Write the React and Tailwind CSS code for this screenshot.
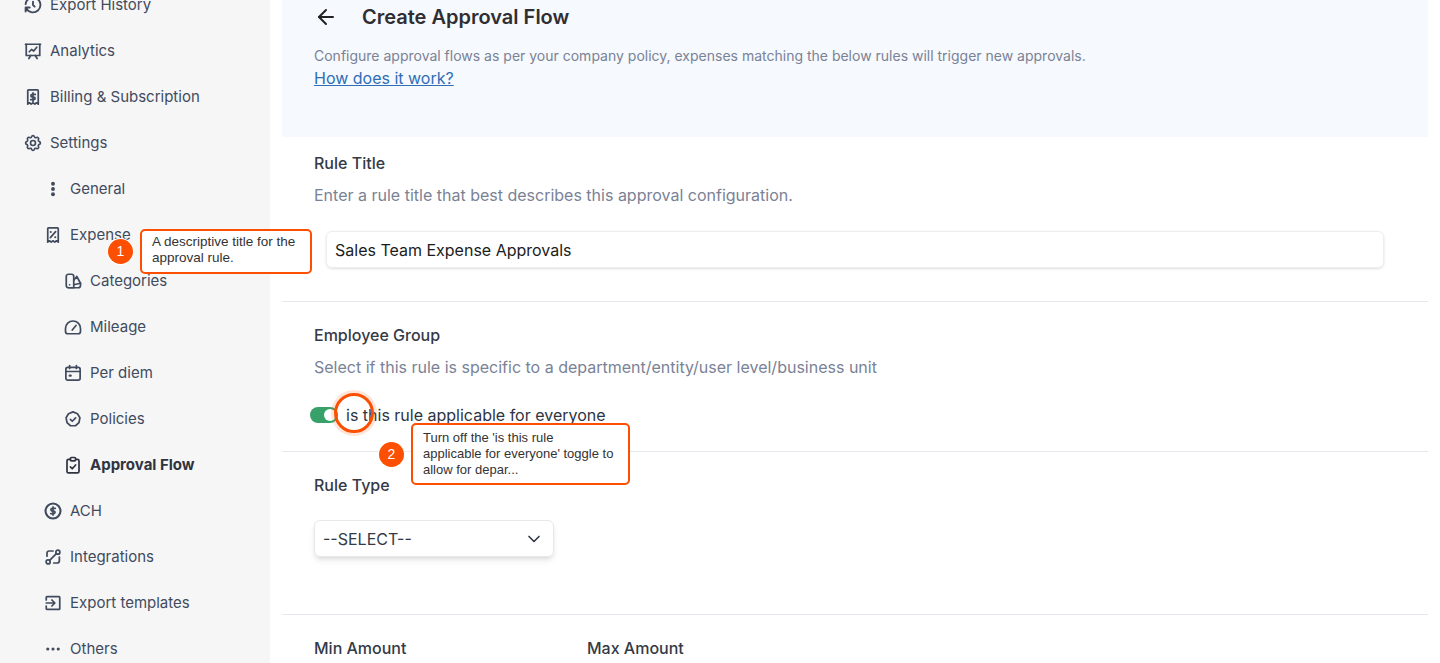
import React from 'react';
import { ChevronDown, ArrowLeft } from 'lucide-react';
import { TbHistory, TbSettings } from 'react-icons/tb';

function Ico({ children, strokeWidth = 2.3, ...props }) {
  return (
    <svg viewBox="0 0 24 24" fill="none" stroke="currentColor" strokeWidth={strokeWidth} strokeLinecap="round" strokeLinejoin="round" {...props}>
      {children}
    </svg>
  );
}

const receipt = 'M6 2.5h12a1 1 0 0 1 1 1v18l-2.3-1.8-2.3 1.8-2.4-1.8-2.4 1.8-2.3-1.8L5 21.5v-18a1 1 0 0 1 1-1z';

const HistoryIcon = ({ className }) => <TbHistory className={`${className} scale-110`} strokeWidth={2.3} />;
const SettingsIcon = ({ className }) => <TbSettings className={`${className} scale-110`} strokeWidth={2} />;
const AnalyticsIcon = (p) => (
  <Ico {...p}>
    <path d="M2 3h20" />
    <path d="M3 3v15h18V3" />
    <path d="M7 13l3-3 3 2 4-5" />
    <path d="M9 18l-2.5 4M15 18l2.5 4" />
  </Ico>
);
const BillingIcon = (p) => (
  <Ico {...p}>
    <path d={receipt} />
    <path d="M15 8.5h-4a1.5 1.5 0 0 0 0 3.5h2a1.5 1.5 0 0 1 0 3.5H9M12 6.5v11" />
  </Ico>
);
const GeneralIcon = (p) => (
  <svg viewBox="0 0 24 24" fill="currentColor" {...p}>
    <circle cx="12" cy="5" r="2.6" />
    <circle cx="12" cy="12" r="2.6" />
    <circle cx="12" cy="19" r="2.6" />
  </svg>
);
const ExpenseIcon = (p) => (
  <Ico {...p}>
    <path d={receipt} />
    <path d="M15.5 7.5l-7 8" />
    <path d="M9 8h.01M15 15h.01" strokeWidth="2.8" />
  </Ico>
);
const CategoriesIcon = (p) => (
  <Ico {...p}>
    <path d="M3 6a3 3 0 0 1 3-3h4a3 3 0 0 1 3 3v15H6a3 3 0 0 1-3-3z" />
    <path d="M13 11l4-5 5 9v3a3 3 0 0 1-3 3H7" />
    <path d="M13 17l9-2" />
    <path d="M7.5 17h.01" />
  </Ico>
);
const MileageIcon = (p) => (
  <Ico {...p}>
    <path d="M5 21h14a3 3 0 0 0 3-3v-4A10 10 0 0 0 2 14v4a3 3 0 0 0 3 3z" />
    <path d="M11 16l5-6" />
  </Ico>
);
const PerDiemIcon = (p) => (
  <Ico {...p}>
    <rect x="2.5" y="4.5" width="19" height="17" rx="2.5" />
    <path d="M7.5 2v4M16.5 2v4M2.5 10h19" />
    <path d="M7.5 15.5h1.5" strokeWidth="2.8" />
  </Ico>
);
const PoliciesIcon = (p) => (
  <Ico {...p}>
    <path d="M12 2.5l6 2.6 3.2 5.2-1.2 6.4-4.7 4.3H8.7L4 16.7l-1.2-6.4L6 5.1z" />
    <path d="M8.5 12.5l2.5 2.5 4.5-4.5" />
  </Ico>
);
const ApprovalIcon = (p) => (
  <Ico {...p}>
    <path d="M8.5 4.5H6a2 2 0 0 0-2 2v14a2 2 0 0 0 2 2h12a2 2 0 0 0 2-2v-14a2 2 0 0 0-2-2h-2.5" />
    <rect x="8.5" y="2" width="7" height="4.5" rx="1.5" />
    <path d="M8.5 14.5l2.5 2.5 4.5-5" />
  </Ico>
);
const AchIcon = (p) => (
  <Ico strokeWidth={2.8} {...p}>
    <circle cx="12" cy="12" r="10" />
    <path d="M15 8.5h-4a1.75 1.75 0 0 0 0 3.5h2a1.75 1.75 0 0 1 0 3.5H9M12 6.5v11" strokeWidth="2.2" />
  </Ico>
);
const IntegrationsIcon = (p) => (
  <Ico {...p}>
    <circle cx="18.5" cy="5.5" r="2.7" />
    <circle cx="5.5" cy="18.5" r="2.7" />
    <path d="M16.5 7.5l-9 9" />
    <path d="M12 4H7a3 3 0 0 0-3 3v4" />
    <path d="M20.5 12v5a3 3 0 0 1-3 3H13" />
  </Ico>
);
const ExportTemplatesIcon = (p) => (
  <Ico {...p}>
    <path d="M3 8V4.5a1 1 0 0 1 1-1h16a1 1 0 0 1 1 1v15a1 1 0 0 1-1 1H4a1 1 0 0 1-1-1V16" />
    <path d="M3 12h11M10.5 8l4 4-4 4" />
  </Ico>
);
const OthersIcon = (p) => (
  <svg viewBox="0 0 24 24" fill="currentColor" {...p}>
    <circle cx="5" cy="12" r="2.1" />
    <circle cx="12" cy="12" r="2.1" />
    <circle cx="19" cy="12" r="2.1" />
  </svg>
);

const navItems = [
  { label: 'Export History', icon: HistoryIcon, indent: 'pl-6' },
  { label: 'Analytics', icon: AnalyticsIcon, indent: 'pl-6' },
  { label: 'Billing & Subscription', icon: BillingIcon, indent: 'pl-6' },
  { label: 'Settings', icon: SettingsIcon, indent: 'pl-6' },
  { label: 'General', icon: GeneralIcon, indent: 'pl-11' },
  { label: 'Expense', icon: ExpenseIcon, indent: 'pl-11' },
  { label: 'Categories', icon: CategoriesIcon, indent: 'pl-16' },
  { label: 'Mileage', icon: MileageIcon, indent: 'pl-16' },
  { label: 'Per diem', icon: PerDiemIcon, indent: 'pl-16' },
  { label: 'Policies', icon: PoliciesIcon, indent: 'pl-16' },
  { label: 'Approval Flow', icon: ApprovalIcon, indent: 'pl-16', active: true },
  { label: 'ACH', icon: AchIcon, indent: 'pl-11' },
  { label: 'Integrations', icon: IntegrationsIcon, indent: 'pl-11' },
  { label: 'Export templates', icon: ExportTemplatesIcon, indent: 'pl-11' },
  { label: 'Others', icon: OthersIcon, indent: 'pl-11' },
];

function Sidebar() {
  return (
    <aside className="w-[270px] shrink-0 bg-[#f6f6f6] h-full overflow-hidden">
      <div className="-mt-[18px]">
        {navItems.map((item) => (
          <div key={item.label} className={`h-[46px] flex items-center gap-2 text-[15px] ${item.indent} ${item.active ? 'font-bold text-[#2f3440]' : 'text-[#414b5e]'}`}>
            <item.icon className="w-[18px] h-[18px] shrink-0" />
            <span>{item.label}</span>
          </div>
        ))}
      </div>
    </aside>
  );
}

function Tip({ number, text, boxClass, dotClass }) {
  return (
    <>
      <div className={`absolute w-[25px] h-[25px] rounded-full bg-[#fd4f01] text-white flex items-center justify-center text-[14px] font-['Liberation_Sans',sans-serif] ring-1 ring-white ${dotClass}`}>
        {number}
      </div>
      <div className={`absolute bg-white border-2 border-[#fd4f01] rounded-[5px] pl-[10px] leading-4 text-[#333] font-['Liberation_Sans',sans-serif] flex items-center ${boxClass}`}>
        <span>{text}</span>
      </div>
    </>
  );
}

export default function App() {
  return (
    <div className="relative w-[1440px] h-[663px] overflow-hidden flex bg-white font-['Inter',sans-serif]">
      <Sidebar />
      <main className="flex-1 pl-3 pr-3 min-w-0">
        <header className="h-[137px] bg-[#f6f9fd] pl-8 pt-[3px]">
          <div className="flex items-center gap-6 h-7">
            <ArrowLeft className="w-6 h-6 text-[#222]" strokeWidth={2} />
            <h1 className="text-[20px] font-semibold text-[#2f2f33]">Create Approval Flow</h1>
          </div>
          <p className="mt-[15px] text-sm leading-5 text-[#7a8296]">
            Configure approval flows as per your company policy, expenses matching the below rules will trigger new approvals.
          </p>
          <a className="block mt-[2px] text-base leading-5 text-[#2f6db5] underline">How does it work?</a>
        </header>

        <section className="pl-8 pt-[16px] h-[165px] border-b border-[#e6e8ee]">
          <h2 className="text-base leading-5 font-medium text-[#343a46]">Rule Title</h2>
          <p className="mt-3 text-base leading-5 text-[#7a8296]">Enter a rule title that best describes this approval configuration.</p>
          <div className="mt-[26px] ml-3 w-[1058px] h-[37px] flex items-center px-2 rounded-md border border-[#eceef1] shadow-sm text-base text-[#1c1c1c]">
            Sales Team Expense Approvals
          </div>
        </section>

        <section className="pl-8 pt-[23px] h-[150px] border-b border-[#e6e8ee]">
          <h2 className="text-base leading-5 font-medium text-[#343a46]">Employee Group</h2>
          <p className="mt-3 text-base leading-5 text-[#7a8296]">Select if this rule is specific to a department/entity/user level/business unit</p>
          <div className="mt-[28px] -ml-1 flex items-center gap-2">
            <div className="w-7 h-4 rounded-full bg-[#38a169] flex items-center justify-end pr-[2px]">
              <div className="w-3 h-3 rounded-full bg-white" />
            </div>
            <span className="text-base leading-5 text-[#2d3442]">is this rule applicable for everyone</span>
          </div>
        </section>

        <section className="pl-8 pt-[23px] h-[163px] border-b border-[#e6e8ee]">
          <h2 className="text-base leading-5 font-medium text-[#343a46]">Rule Type</h2>
          <div className="mt-[25px] w-[240px] h-[37px] flex items-center justify-between pl-2 pr-[9px] rounded-md border border-[#e6e8ec] shadow-md text-base text-[#343a46]">
            <span>--SELECT--</span>
            <ChevronDown className="w-5 h-5" />
          </div>
        </section>

        <section className="pl-8 pt-[23px] flex">
          <h2 className="w-[273px] text-base leading-5 font-medium text-[#343a46]">Min Amount</h2>
          <h2 className="text-base leading-5 font-medium text-[#343a46]">Max Amount</h2>
        </section>
      </main>

      {/* walkthrough overlays */}
      <div className="absolute left-[334px] top-[393px] w-10 h-10 rounded-full border-[3px] border-[#fd4f01] shadow-[0_0_0_3px_rgba(253,79,1,0.15)]" />
      <Tip number="1" text="A descriptive title for the approval rule." dotClass="left-[108px] top-[239px]" boxClass="left-[140px] top-[229px] w-[172px] h-[45px] pb-[3px] pr-[10px] text-[13.5px]" />
      <Tip number="2" text="Turn off the 'is this rule applicable for everyone' toggle to allow for depar..." dotClass="left-[379px] top-[442px]" boxClass="left-[411px] top-[423px] w-[219px] h-[62px] pr-[13px] text-[13px]" />
    </div>
  );
}
